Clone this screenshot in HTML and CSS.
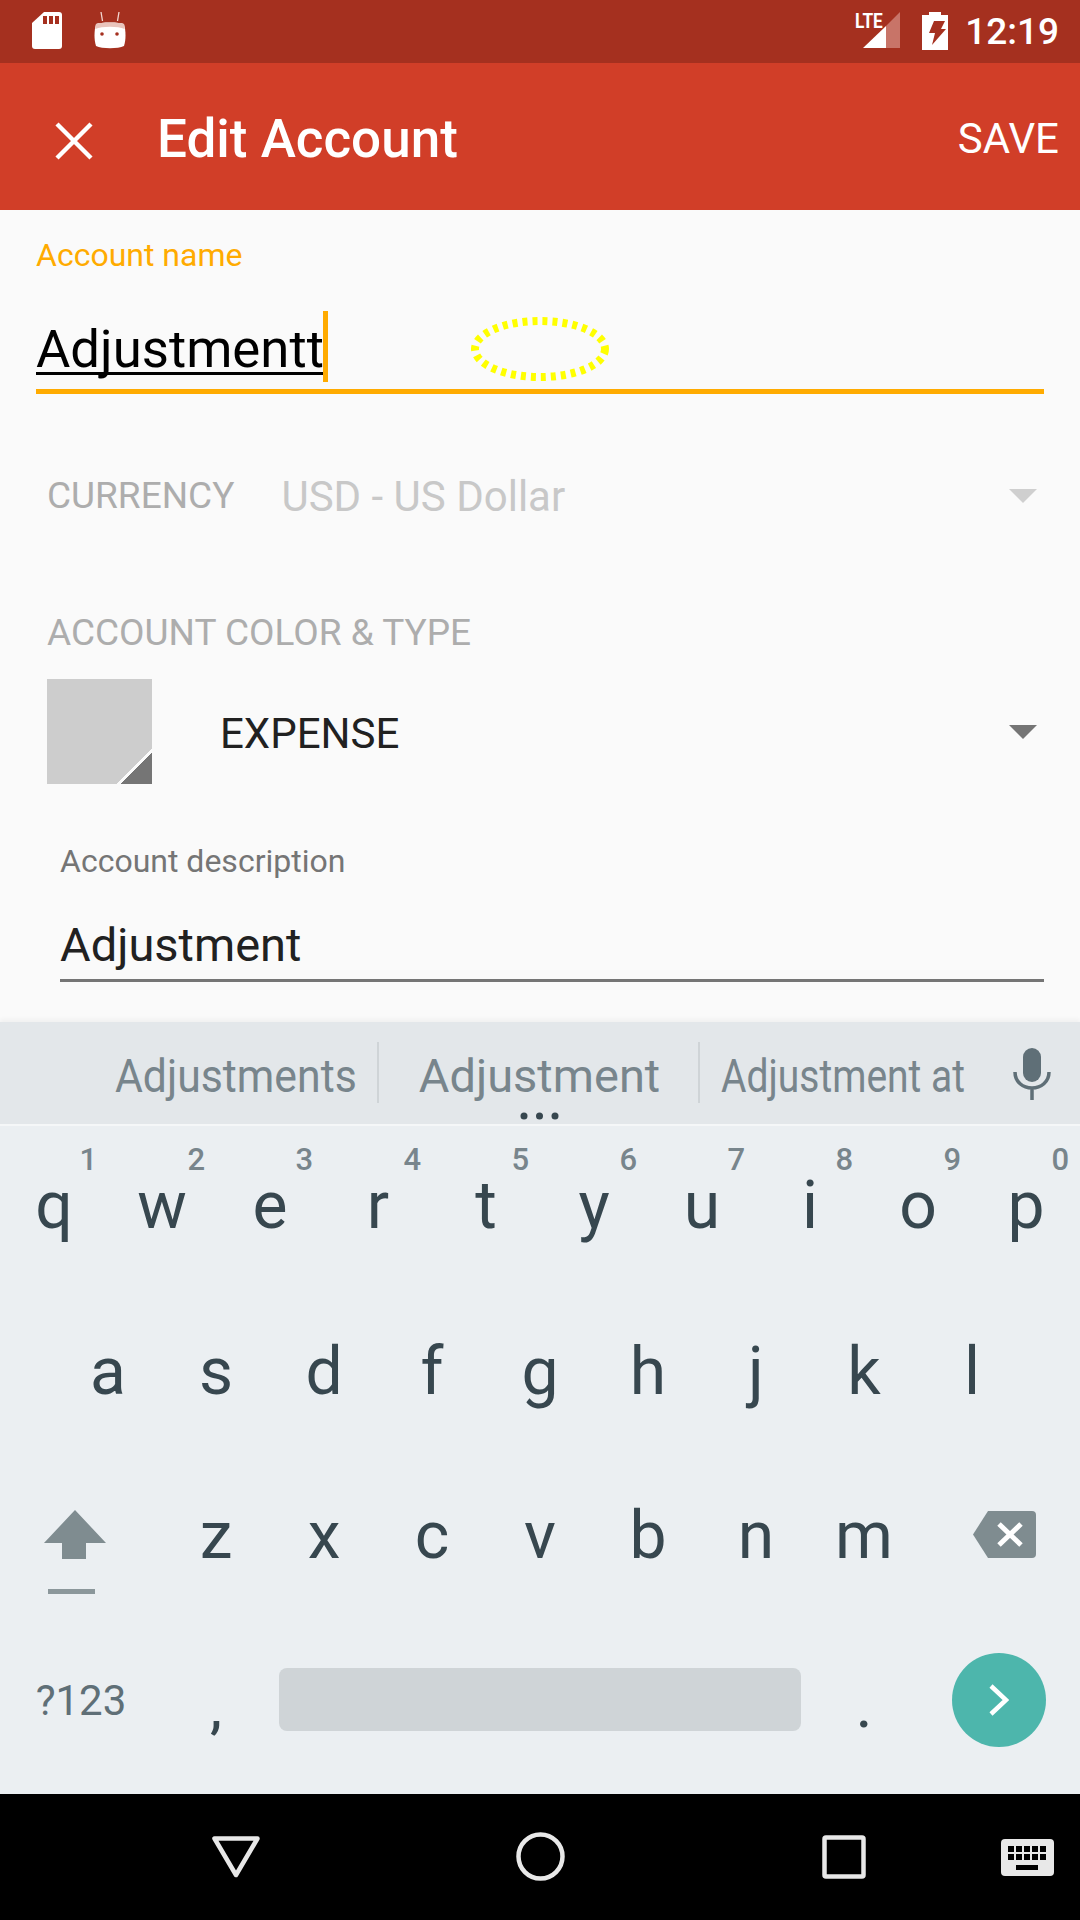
FILE: index.html
```html
<!DOCTYPE html>
<html lang="en">
<head>
  <meta charset="UTF-8">
  <meta name="viewport" content="width=device-width, initial-scale=1">
  <title>Edit Account</title>
  <link rel="stylesheet" href="styles.css">
</head>
<body>

  <div class="statusbar">
    <div class="status-left">
      <svg width="30" height="37" viewBox="0 0 30 37">
        <path fill="#fff" d="M12 0h15a3 3 0 0 1 3 3v31a3 3 0 0 1-3 3H3a3 3 0 0 1-3-3V11z"/>
        <path fill="#a5301f" d="M11 4h4v8h-4zM17 4h4v8h-4zM23 4h4v8h-4z"/>
      </svg>
      <svg width="32" height="38" viewBox="0 0 32 38">
        <path stroke="#f3d6d0" stroke-width="1.300" fill="none" d="M7 0l1.500 9M25 0l-1.500 9"/>
        <path fill="#fff" d="M2 12c4-2 24-2 28 0 2 7 2 16 0 22-6 3-22 3-28 0-2-6-2-15 0-22z"/>
        <path fill="#e9c4bc" d="M2 12c4-2 24-2 28 0l.6 5C24 14 8 14 1.400 17z"/>
        <circle cx="8" cy="22" r="1.800" fill="#a5301f"/>
        <circle cx="23" cy="22" r="1.800" fill="#a5301f"/>
      </svg>
    </div>
    <div class="status-right">
      <div class="signal">
        <span class="lte">LTE</span>
        <svg width="45" height="37" viewBox="0 0 45 37">
          <path fill="#c87468" d="M45 0v36H31V14z"/>
          <path fill="#fff" d="M31 14v22H8z"/>
        </svg>
      </div>
      <svg class="battery" width="26" height="38" viewBox="0 0 26 38">
        <path fill="#fff" d="M7 0h12v3h7v35H0V3h7z"/>
        <path fill="#a5301f" d="M12 9h11l-4 8h5L10 33l3-12H7z"/>
      </svg>
      <span class="clock">12:19</span>
    </div>
  </div>

  <div class="toolbar">
    <svg class="close-icon" width="38" height="38" viewBox="0 0 38 38">
      <path stroke="#fff" stroke-width="4.400" d="M2 2l34 34M36 2L2 36"/>
    </svg>
    <div class="title">Edit Account</div>
    <div class="save">SAVE</div>
  </div>

  <div class="form">
    <div class="label-active">Account name</div>
    <div class="name-input">
      <span class="composing">Adjustmentt<span class="cursor"></span></span>
      <svg class="touch-ring" width="140" height="66" viewBox="0 0 140 66">
        <ellipse cx="70" cy="33" rx="65" ry="28" fill="none" stroke="#ffff00" stroke-width="8" stroke-dasharray="5 5"/>
      </svg>
    </div>

    <div class="currency-row">
      <span class="caps-label">CURRENCY</span>
      <span class="currency-value">USD - US Dollar</span>
      <span class="arrow arrow-light"></span>
    </div>

    <div class="caps-label type-label">ACCOUNT COLOR &amp; TYPE</div>
    <div class="type-row">
      <div class="swatch"></div>
      <span class="type-value">EXPENSE</span>
      <span class="arrow"></span>
    </div>

    <div class="label-desc">Account description</div>
    <div class="desc-input">Adjustment</div>
  </div>

  <div class="suggestions">
    <div class="suggestion first"><span class="squeeze">Adjustments</span></div>
    <div class="suggestion middle">Adjustment
      <svg class="more-dots" width="39" height="8" viewBox="0 0 39 8">
        <circle cx="4" cy="4" r="3.500" fill="#37474f"/>
        <circle cx="19.500" cy="4" r="3.500" fill="#37474f"/>
        <circle cx="35" cy="4" r="3.500" fill="#37474f"/>
      </svg>
    </div>
    <div class="suggestion last"><span class="squeeze tighter">Adjustment at</span></div>
    <div class="mic">
      <svg width="38" height="52" viewBox="0 0 38 52">
        <rect x="10" y="0" width="18" height="34" rx="9" fill="#5f6f77"/>
        <path fill="none" stroke="#5f6f77" stroke-width="3.500" d="M2 24c0 10 8 16 17 16s17-6 17-16M19 40v12"/>
      </svg>
    </div>
  </div>

  <div class="keyboard">
    <div class="key-row row-top">
      <div class="key">q<span class="digit">1</span></div>
      <div class="key">w<span class="digit">2</span></div>
      <div class="key">e<span class="digit">3</span></div>
      <div class="key">r<span class="digit">4</span></div>
      <div class="key">t<span class="digit">5</span></div>
      <div class="key">y<span class="digit">6</span></div>
      <div class="key">u<span class="digit">7</span></div>
      <div class="key">i<span class="digit">8</span></div>
      <div class="key">o<span class="digit">9</span></div>
      <div class="key">p<span class="digit">0</span></div>
    </div>
    <div class="key-row row-home">
      <div class="key">a</div>
      <div class="key">s</div>
      <div class="key">d</div>
      <div class="key">f</div>
      <div class="key">g</div>
      <div class="key">h</div>
      <div class="key">j</div>
      <div class="key">k</div>
      <div class="key">l</div>
    </div>
    <div class="key-row row-shift">
      <div class="key wide shift-key">
        <svg width="64" height="84" viewBox="0 0 64 84">
          <path fill="#7f8c90" d="M32 0l31 33H43v16H19V33H1z"/>
          <path fill="#8b979b" d="M5 79h47v5H5z"/>
        </svg>
      </div>
      <div class="key">z</div>
      <div class="key">x</div>
      <div class="key">c</div>
      <div class="key">v</div>
      <div class="key">b</div>
      <div class="key">n</div>
      <div class="key">m</div>
      <div class="key wide back-key">
        <svg width="63" height="47" viewBox="0 0 63 47">
          <path fill="#7f8c90" d="M15 0h44a4 4 0 0 1 4 4v39a4 4 0 0 1-4 4H15L0 23.500z"/>
          <path stroke="#fff" stroke-width="5" d="M26 13l22 21M48 13L26 34"/>
        </svg>
      </div>
    </div>
    <div class="key-row row-bottom">
      <div class="key wide symbols">?123</div>
      <div class="key punct">,</div>
      <div class="space-wrap"><div class="spacebar"></div></div>
      <div class="key punct">.</div>
      <div class="key wide enter-wrap">
        <div class="enter">
          <svg width="20" height="32" viewBox="0 0 20 32">
            <path fill="none" stroke="#fff" stroke-width="4.500" d="M2 2l15 14L2 30"/>
          </svg>
        </div>
      </div>
    </div>
  </div>

  <div class="navbar">
    <svg class="nav-back" width="48" height="42" viewBox="0 0 48 42">
      <path fill="none" stroke="#e8e8e8" stroke-width="4.500" stroke-linejoin="round" d="M2.500 2.500h43L24 39z"/>
    </svg>
    <svg class="nav-home" width="49" height="49" viewBox="0 0 49 49">
      <circle cx="24.500" cy="24.500" r="22" fill="none" stroke="#e8e8e8" stroke-width="4.500"/>
    </svg>
    <svg class="nav-recent" width="44" height="44" viewBox="0 0 44 44">
      <rect x="2.500" y="2.500" width="39" height="39" rx="1.500" fill="none" stroke="#e8e8e8" stroke-width="4.500"/>
    </svg>
    <svg class="nav-keyboard" width="53" height="37" viewBox="0 0 53 37">
      <rect width="53" height="37" rx="4" fill="#e8e8e8"/>
      <path fill="#000" d="M7 7h6v6H7zM15 7h6v6h-6zM23 7h6v6h-6zM31 7h6v6h-6zM39 7h6v6h-6zM7 15h6v6H7zM15 15h6v6h-6zM23 15h6v6h-6zM31 15h6v6h-6zM39 15h6v6h-6zM15 26h22v5H15z"/>
    </svg>
  </div>

</body>
</html>
```

FILE: styles.css
```css
* {
  box-sizing: border-box;
}
body {
  margin: 0;
  width: 1080px;
  height: 1920px;
  overflow: hidden;
  background-color: #fafafa;
  font-family: Roboto, "Liberation Sans", sans-serif;
}

/* status bar */
.statusbar {
  height: 63px;
  background-color: #a5301f;
  display: flex;
  justify-content: space-between;
  align-items: flex-start;
  padding: 12px 21px 0 32px;
}
.status-left {
  display: flex;
  gap: 32px;
  align-items: flex-start;
}
.status-right {
  display: flex;
  align-items: flex-start;
}
.signal {
  position: relative;
  margin-right: 22px;
  line-height: 0;
}
.lte {
  position: absolute;
  left: 0;
  top: -1px;
  font-size: 21px;
  font-weight: 700;
  line-height: 21px;
  color: #fff;
  display: inline-block;
  transform: scaleX(0.82);
  transform-origin: left top;
}
.battery {
  margin-right: 17px;
}
.clock {
  color: #fff;
  font-size: 37px;
  font-weight: 500;
  line-height: 40px;
}

/* toolbar */
.toolbar {
  height: 147px;
  background-color: #d13e28;
  display: flex;
  align-items: center;
  padding: 8px 21px 0 55px;
  color: #fff;
}
.close-icon {
  margin-right: 64px;
}
.title {
  font-size: 53px;
  font-weight: 500;
  flex: 1;
  padding-bottom: 4px;
}
.save {
  font-size: 42px;
  padding-bottom: 5px;
}

/* form */
.form {
  height: 812px;
  background-color: #fafafa;
  padding: 15px 36px 0;
}
.label-active {
  color: #ffab00;
  font-size: 32px;
  line-height: 60px;
}
.name-input {
  position: relative;
  margin-top: 32px;
  height: 77px;
  line-height: 64px;
  font-size: 52.7px;
  color: #000;
  border-bottom: 5px solid #ffab00;
}
.composing {
  position: relative;
  display: inline-block;
  text-decoration: underline;
  text-decoration-thickness: 3px;
  text-underline-offset: 5px;
  text-decoration-skip-ink: none;
}
.cursor {
  position: absolute;
  right: -4px;
  top: -6px;
  width: 5px;
  height: 71px;
  background-color: #ffab00;
}
.touch-ring {
  position: absolute;
  left: 434px;
  top: -1px;
}
.currency-row {
  display: flex;
  align-items: center;
  margin-top: 72px;
  height: 60px;
  padding: 0 7px 0 11px;
}
.caps-label {
  color: #adadad;
  font-size: 37px;
  line-height: 44px;
}
.currency-value {
  color: #c8c8c8;
  font-size: 42px;
  margin-left: 47px;
  flex: 1;
}
.arrow {
  width: 0;
  height: 0;
  border-left: 14px solid transparent;
  border-right: 14px solid transparent;
  border-top: 14px solid #757575;
}
.arrow-light {
  border-top-color: #cfcfcf;
}
.type-label {
  margin-top: 85px;
  padding: 0 11px;
}
.type-row {
  display: flex;
  align-items: center;
  margin-top: 24px;
  padding: 0 7px 0 11px;
}
.swatch {
  width: 105px;
  height: 105px;
  background: linear-gradient(135deg, #cdcdcd 82.900%, #fafafa 82.900%, #fafafa 85.200%, #757575 85.200%);
}
.type-value {
  flex: 1;
  margin-left: 68px;
  font-size: 42px;
  color: #212121;
  padding-top: 3px;
}
.label-desc {
  margin: 57px 0 0 24px;
  color: #757575;
  font-size: 32px;
  line-height: 40px;
}
.desc-input {
  margin: 32px 0 0 24px;
  height: 69px;
  line-height: 64px;
  font-size: 47px;
  color: #212121;
  border-bottom: 3px solid #757575;
}

/* suggestion strip */
.suggestions {
  height: 104px;
  background-color: #e3e7ea;
  border-bottom: 2px solid #f5f7f8;
  box-shadow: 0 -3px 4px rgba(0, 0, 0, 0.04);
  position: relative;
  display: flex;
  align-items: flex-start;
  padding-top: 20px;
  color: #78858c;
  font-size: 47px;
  line-height: 61px;
}
.suggestion {
  position: relative;
  height: 61px;
  text-align: center;
  white-space: nowrap;
  padding-top: 3px;
}
.first {
  margin-left: 94px;
  width: 285px;
  border-right: 2px solid #cfd4d7;
}
.middle {
  width: 321px;
  padding-left: 2px;
  border-right: 2px solid #cfd4d7;
}
.last {
  width: 288px;
}
.squeeze {
  display: inline-block;
  transform: scaleX(0.91);
}
.tighter {
  transform: translateX(-4px) scaleX(0.83);
}
.more-dots {
  position: absolute;
  left: 141px;
  top: 70px;
}
.mic {
  flex: 1;
  text-align: center;
  line-height: 0;
  padding: 6px 4px 0 0;
}

/* keyboard */
.keyboard {
  height: 668px;
  background-color: #ebeff2;
  color: #37474f;
}
.key-row {
  display: flex;
  height: 167px;
}
.row-top .key {
  padding-bottom: 8px;
}
.row-home {
  padding-left: 54px;
}
.row-shift .key:not(.wide) {
  padding-bottom: 16px;
}
.key {
  position: relative;
  width: 108px;
  height: 167px;
  display: flex;
  align-items: center;
  justify-content: center;
  font-size: 66px;
  padding-bottom: 10px;
}
.digit {
  position: absolute;
  right: 11px;
  top: 19px;
  font-size: 31px;
  line-height: 30px;
  font-weight: 500;
  color: #78858c;
}
.wide {
  width: 162px;
}
.shift-key {
  padding: 50px 12px 0 0;
  align-items: flex-start;
}
.back-key {
  padding: 51px 0 0 10px;
  align-items: flex-start;
}
.symbols {
  font-size: 42px;
  color: #5f6f77;
  padding: 0 0 21px 0;
}
.punct {
  font-size: 54px;
  font-weight: 500;
  padding: 0 0 4px;
}
.space-wrap {
  flex: 1;
  padding: 41px 9px 0;
}
.spacebar {
  height: 63px;
  background-color: #cfd4d7;
  border-radius: 8px;
}
.enter-wrap {
  padding: 26px 0 0;
  align-items: flex-start;
}
.enter {
  width: 94px;
  height: 94px;
  border-radius: 50%;
  background-color: #4db6ac;
  display: flex;
  align-items: center;
  justify-content: center;
}

/* nav bar */
.navbar {
  height: 126px;
  background-color: #000;
  display: flex;
  align-items: flex-start;
  padding-left: 212px;
}
.nav-back {
  margin-top: 42px;
}
.nav-home {
  margin: 38px 0 0 256px;
}
.nav-recent {
  margin: 41px 0 0 257px;
}
.nav-keyboard {
  margin: 45px 0 0 135px;
}
```
